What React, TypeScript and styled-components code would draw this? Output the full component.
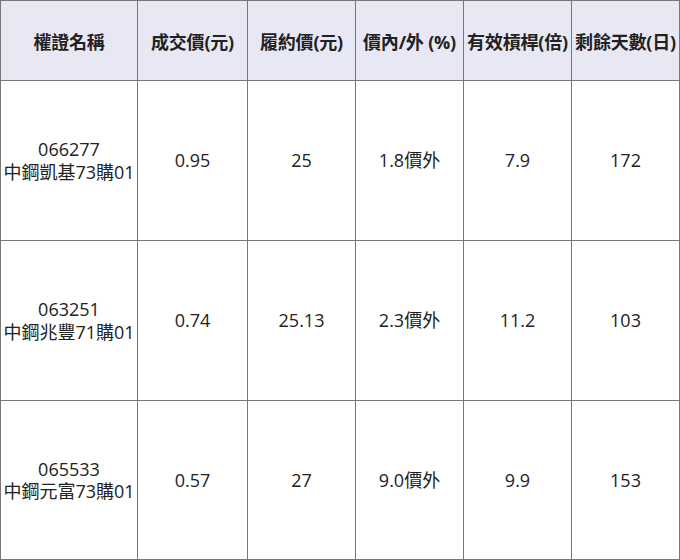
import styled, { createGlobalStyle } from 'styled-components';

const GlobalStyle = createGlobalStyle`
  html, body {
    margin: 0;
    padding: 0;
    background: #ffffff;
  }
`;

type Warrant = {
  code: string;
  name: string;
  price: string;
  strike: string;
  moneyness: string;
  leverage: string;
  days: string;
};

const headers = ['權證名稱', '成交價(元)', '履約價(元)', '價內/外 (%)', '有效槓桿(倍)', '剩餘天數(日)'];
const widths = [137, 110, 108, 108, 108, 108];

const warrants: Warrant[] = [
  { code: '066277', name: '中鋼凱基73購01', price: '0.95', strike: '25', moneyness: '1.8價外', leverage: '7.9', days: '172' },
  { code: '063251', name: '中鋼兆豐71購01', price: '0.74', strike: '25.13', moneyness: '2.3價外', leverage: '11.2', days: '103' },
  { code: '065533', name: '中鋼元富73購01', price: '0.57', strike: '27', moneyness: '9.0價外', leverage: '9.9', days: '153' },
];

const App = () => {
  return (
    <>
      <GlobalStyle />
      <WarrantTable>
        <colgroup>
          {widths.map((w, i) => (
            <col key={i} style={{ width: w }} />
          ))}
        </colgroup>
        <thead>
          <HeadRow>
            {headers.map((h) => (
              <HeadCell key={h}>{h}</HeadCell>
            ))}
          </HeadRow>
        </thead>
        <tbody>
          {warrants.map((w, i) => (
            <BodyRow key={w.code} last={i === warrants.length - 1}>
              <Cell>
                {w.code}
                <br />
                {w.name}
              </Cell>
              <Cell>{w.price}</Cell>
              <Cell>{w.strike}</Cell>
              <Cell>{w.moneyness}</Cell>
              <Cell>{w.leverage}</Cell>
              <Cell>{w.days}</Cell>
            </BodyRow>
          ))}
        </tbody>
      </WarrantTable>
    </>
  );
};

export default App;

const WarrantTable = styled.table`
  width: 679px;
  table-layout: fixed;
  border-collapse: collapse;
  font-family: 'Open Sans', 'Noto Sans CJK TC', sans-serif;
  font-size: 18px;
  color: #222222;
`;

const HeadRow = styled.tr`
  height: 80px;
  background: #e8e8f4;
`;

const HeadCell = styled.th`
  border: 1px solid #777777;
  font-weight: 700;
  text-align: center;
  vertical-align: middle;
  padding: 0;
  white-space: nowrap;
  letter-spacing: -0.2px;
`;

const BodyRow = styled.tr<{ last?: boolean }>`
  height: ${(p) => (p.last ? '159px' : '160px')};
`;

const Cell = styled.td`
  border: 1px solid #777777;
  text-align: center;
  vertical-align: middle;
  padding: 0;
  line-height: 1.25;
  white-space: nowrap;
`;
